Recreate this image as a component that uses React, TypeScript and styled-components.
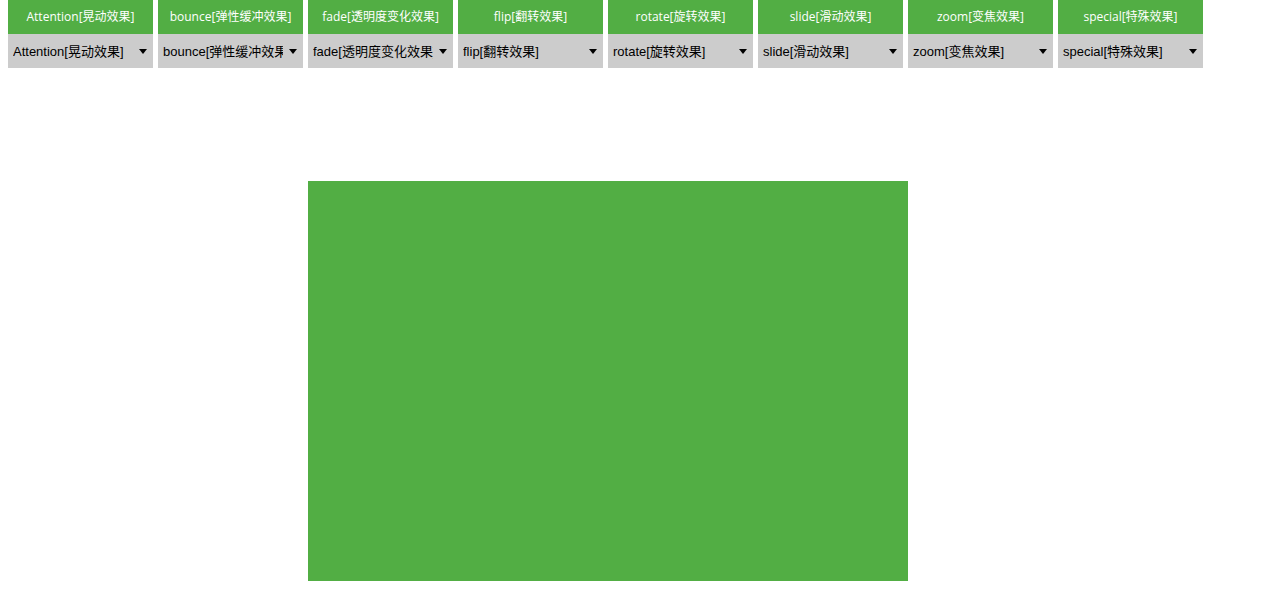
import React from "react"
import styled, { createGlobalStyle } from "styled-components"

const groups = [
  { name: "Attention", label: "晃动效果" },
  { name: "bounce", label: "弹性缓冲效果" },
  { name: "fade", label: "透明度变化效果" },
  { name: "flip", label: "翻转效果" },
  { name: "rotate", label: "旋转效果" },
  { name: "slide", label: "滑动效果" },
  { name: "zoom", label: "变焦效果" },
  { name: "special", label: "特殊效果" },
]

const GlobalStyle = createGlobalStyle`
  body {
    margin: 0;
    padding: 0 8px;
    background: #fff;
    font-family: "Liberation Sans", "Noto Sans CJK SC", sans-serif;
  }
`

export default function App() {
  return (
    <>
      <GlobalStyle />
      <Menu>
        {groups.map((g) => (
          <Column key={g.name}>
            <Heading>{`${g.name}[${g.label}]`}</Heading>
            <SelectWrap>
              <Select defaultValue={g.name}>
                <option value={g.name}>{`${g.name}[${g.label}]`}</option>
              </Select>
              <Arrow width="8" height="5" viewBox="0 0 8 5">
                <path d="M0 0h8L4 5z" fill="#000" />
              </Arrow>
            </SelectWrap>
          </Column>
        ))}
      </Menu>
      <Stage />
    </>
  )
}

const Menu = styled.nav`
  display: flex;
  gap: 5px;
`

const Column = styled.div`
  width: 145px;
  display: flex;
  flex-direction: column;
`

const Heading = styled.div`
  height: 34px;
  box-sizing: border-box;
  padding-bottom: 3px;
  background: #52ae44;
  color: #fff;
  font-family: "Open Sans", "Noto Sans CJK SC", sans-serif;
  font-size: 12px;
  display: flex;
  align-items: center;
  justify-content: center;
  white-space: nowrap;
`

const SelectWrap = styled.div`
  position: relative;
  height: 34px;
  background: #cccccc;
`

const Select = styled.select`
  appearance: none;
  width: 100%;
  height: 100%;
  border: none;
  outline: none;
  background: transparent;
  padding: 0 20px 0 5px;
  margin: 0;
  font-family: "Liberation Sans", "Noto Sans CJK SC", sans-serif;
  font-size: 13px;
  color: #000;
  white-space: nowrap;
  overflow: hidden;
`

const Arrow = styled.svg`
  position: absolute;
  right: 6px;
  top: 15px;
  pointer-events: none;
`

const Stage = styled.div`
  width: 600px;
  height: 400px;
  margin: 113px 0 0 300px;
  background: #52ae44;
`
